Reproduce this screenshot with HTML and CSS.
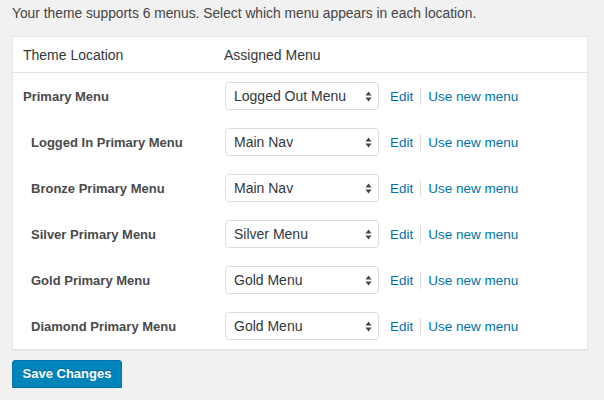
FILE: index.html
```html
<!DOCTYPE html>
<html>
<head>
<meta charset="utf-8">
<link rel="stylesheet" href="styles.css">
</head>
<body>
<p class="intro">Your theme supports 6 menus. Select which menu appears in each location.</p>
<div class="locations">
  <div class="row head">
    <div class="col-loc">Theme Location</div>
    <div class="col-menu">Assigned Menu</div>
  </div>
  <div class="row">
    <div class="col-loc label">Primary Menu</div>
    <div class="col-menu">
      <div class="select"><span>Logged Out Menu</span><svg class="arrows" width="7" height="11" viewBox="0 0 7 11"><path d="M3.5 0.5L6.5 4.5H0.5Z M3.5 10.5L6.5 6.5H0.5Z" fill="#444"/></svg></div>
      <a class="link" href="#">Edit</a><span class="sep"></span><a class="link" href="#">Use new menu</a>
    </div>
  </div>
  <div class="row">
    <div class="col-loc label sub">Logged In Primary Menu</div>
    <div class="col-menu">
      <div class="select"><span>Main Nav</span><svg class="arrows" width="7" height="11" viewBox="0 0 7 11"><path d="M3.5 0.5L6.5 4.5H0.5Z M3.5 10.5L6.5 6.5H0.5Z" fill="#444"/></svg></div>
      <a class="link" href="#">Edit</a><span class="sep"></span><a class="link" href="#">Use new menu</a>
    </div>
  </div>
  <div class="row">
    <div class="col-loc label sub">Bronze Primary Menu</div>
    <div class="col-menu">
      <div class="select"><span>Main Nav</span><svg class="arrows" width="7" height="11" viewBox="0 0 7 11"><path d="M3.5 0.5L6.5 4.5H0.5Z M3.5 10.5L6.5 6.5H0.5Z" fill="#444"/></svg></div>
      <a class="link" href="#">Edit</a><span class="sep"></span><a class="link" href="#">Use new menu</a>
    </div>
  </div>
  <div class="row">
    <div class="col-loc label sub">Silver Primary Menu</div>
    <div class="col-menu">
      <div class="select"><span>Silver Menu</span><svg class="arrows" width="7" height="11" viewBox="0 0 7 11"><path d="M3.5 0.5L6.5 4.5H0.5Z M3.5 10.5L6.5 6.5H0.5Z" fill="#444"/></svg></div>
      <a class="link" href="#">Edit</a><span class="sep"></span><a class="link" href="#">Use new menu</a>
    </div>
  </div>
  <div class="row">
    <div class="col-loc label sub">Gold Primary Menu</div>
    <div class="col-menu">
      <div class="select"><span>Gold Menu</span><svg class="arrows" width="7" height="11" viewBox="0 0 7 11"><path d="M3.5 0.5L6.5 4.5H0.5Z M3.5 10.5L6.5 6.5H0.5Z" fill="#444"/></svg></div>
      <a class="link" href="#">Edit</a><span class="sep"></span><a class="link" href="#">Use new menu</a>
    </div>
  </div>
  <div class="row">
    <div class="col-loc label sub">Diamond Primary Menu</div>
    <div class="col-menu">
      <div class="select"><span>Gold Menu</span><svg class="arrows" width="7" height="11" viewBox="0 0 7 11"><path d="M3.5 0.5L6.5 4.5H0.5Z M3.5 10.5L6.5 6.5H0.5Z" fill="#444"/></svg></div>
      <a class="link" href="#">Edit</a><span class="sep"></span><a class="link" href="#">Use new menu</a>
    </div>
  </div>
</div>
<div class="actions"><button class="button-primary">Save Changes</button></div>
</body>
</html>
```

FILE: styles.css
```css
html, body {
  margin: 0;
  padding: 0;
  background: #f1f1f1;
}
body {
  font-family: "Liberation Sans", Arial, sans-serif;
  font-size: 13px;
  color: #444;
  padding: 0 16px 0 12px;
}
.intro {
  margin: 0;
  padding-top: 5px;
  height: 31px;
  line-height: 18px;
  font-size: 13.8px;
  color: #444;
  white-space: nowrap;
}
.locations {
  width: 574px;
  background: #fff;
  border: 1px solid #e5e5e5;
  box-shadow: 0 1px 1px rgba(0,0,0,0.04);
}
.row {
  display: grid;
  grid-template-columns: 201px 1fr;
  align-items: center;
  height: 46px;
  padding: 0 10px;
}
.row.head {
  height: 35px;
  border-bottom: 1px solid #e1e1e1;
  font-size: 14px;
  color: #32373c;
}
.label {
  font-weight: bold;
  color: #4a4a4a;
  font-size: 13px;
  white-space: nowrap;
}
.label.sub {
  padding-left: 8px;
}
.col-menu {
  display: flex;
  align-items: center;
}
.select {
  box-sizing: border-box;
  width: 154px;
  height: 28px;
  margin-left: 1px;
  border: 1px solid #ddd;
  border-radius: 4px;
  display: flex;
  align-items: center;
  justify-content: space-between;
  padding: 0 6px 0 8px;
  font-size: 14px;
  color: #32373c;
  background: #fff;
}
.arrows {
  display: block;
}
.link {
  color: #0073aa;
  text-decoration: none;
  font-size: 13.5px;
}
.select + .link {
  margin-left: 11px;
}
.sep {
  display: inline-block;
  width: 1px;
  height: 17px;
  background: #ddd;
  margin: 0 7px;
}
.actions {
  padding-top: 10px;
}
.button-primary {
  box-sizing: border-box;
  width: 110px;
  height: 28px;
  margin: 0;
  padding: 0 0 1px;
  white-space: nowrap;
  background: #0085ba;
  border: 1px solid #0073aa;
  border-radius: 3px;
  box-shadow: 0 1px 0 #006799;
  color: #fff;
  font-family: "Liberation Sans", Arial, sans-serif;
  font-size: 13px;
  font-weight: bold;
  text-shadow: 0 -1px 1px #006799;
}
```
